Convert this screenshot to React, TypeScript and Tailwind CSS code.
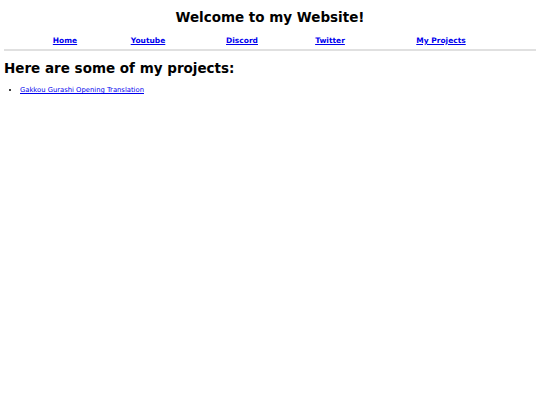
export default function App() {
  return (
    <div className="min-h-screen bg-white px-[4px] font-['DejaVu_Sans',sans-serif] text-black">
      {/* Header */}
      <h1 className="pt-[9px] text-center text-[13.5px] font-bold leading-[16px]">Welcome to my Website!</h1>

      {/* Nav */}
      <div className="mt-[11px] grid grid-cols-[82px_84px_104px_72px_150px] pl-[20px] text-[7.5px] font-bold leading-[10px]">
        <a href="#" className="text-center text-[#0000ee] underline">Home</a>
        <a href="#" className="text-center text-[#0000ee] underline">Youtube</a>
        <a href="#" className="text-center text-[#0000ee] underline">Discord</a>
        <a href="#" className="text-center text-[#0000ee] underline">Twitter</a>
        <a href="#" className="text-center text-[#0000ee] underline">My Projects</a>
      </div>
      <div className="mt-[3px] h-[2px] bg-[#e0e0e0]" />

      {/* Projects */}
      <h2 className="mt-[9px] text-[13.5px] font-bold leading-[16px]">Here are some of my projects:</h2>
      <ul className="mt-[9px] list-disc pl-[16px] text-[6.8px] leading-[10px]">
        <li>
          <a href="#" className="text-[#0000ee] underline">Gakkou Gurashi Opening Translation</a>
        </li>
      </ul>
    </div>
  )
}
